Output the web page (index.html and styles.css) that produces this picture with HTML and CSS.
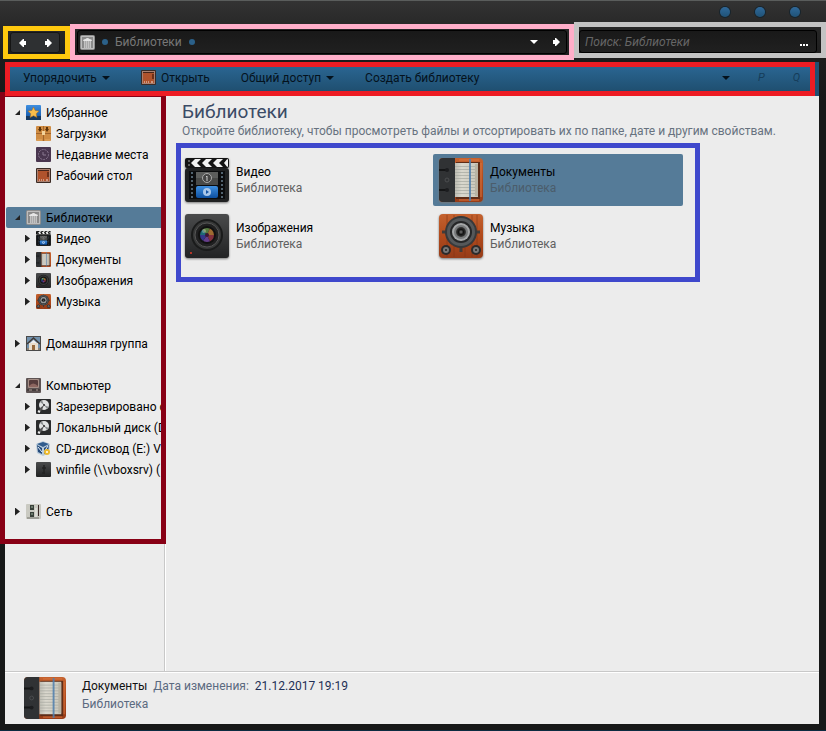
FILE: index.html
```html
<!DOCTYPE html>
<html lang="ru">
<head>
<meta charset="utf-8">
<title>Библиотеки</title>
<link rel="stylesheet" href="styles.css">
</head>
<body>
<svg class="sprite" aria-hidden="true">
  <defs>
    <linearGradient id="g-dark" x1="0" y1="0" x2="0" y2="1"><stop offset="0" stop-color="#4a4b4c"/><stop offset="1" stop-color="#222324"/></linearGradient>
    <linearGradient id="g-wood" x1="0" y1="0" x2="0" y2="1"><stop offset="0" stop-color="#c4622f"/><stop offset=".5" stop-color="#b14a1c"/><stop offset="1" stop-color="#963c18"/></linearGradient>
    <linearGradient id="g-blue" x1="0" y1="0" x2="0" y2="1"><stop offset="0" stop-color="#3f8fe0"/><stop offset="1" stop-color="#0d4fa0"/></linearGradient>
    <linearGradient id="g-silver" x1="0" y1="0" x2="0" y2="1"><stop offset="0" stop-color="#d8d8d8"/><stop offset="1" stop-color="#7d7d7d"/></linearGradient>
    <linearGradient id="g-page"><stop offset="0" stop-color="#bdbcb2"/><stop offset=".3" stop-color="#dad8ce"/><stop offset="1" stop-color="#c9c6b9"/></linearGradient>
    <radialGradient id="g-lens"><stop offset="0" stop-color="#777"/><stop offset=".5" stop-color="#111"/><stop offset="1" stop-color="#3a3a3a"/></radialGradient>
    <clipPath id="c-lens"><circle cx="22" cy="21" r="7"/></clipPath>
    <clipPath id="c-clap"><rect x="1" y="1" width="42" height="8" rx="1"/></clipPath>
  </defs>
  <symbol id="video" viewBox="0 0 44 44">
    <rect x="0" y="10" width="44" height="34" rx="3" fill="#202122"/>
    <rect x="0" y="0" width="44" height="10" rx="2" fill="#141414"/>
    <g clip-path="url(#c-clap)" fill="#f2f2f2"><path d="M11 0h6l-5 5 5 5h-6l-5-5zM22 0h6l-5 5 5 5h-6l-5-5zM33 0h6l-5 5 5 5h-6l-5-5zM43 0h3v10h-3l-4-5z"/></g>
    <circle cx="4" cy="3" r="1" fill="#777"/><circle cx="4" cy="7" r="1" fill="#777"/>
    <rect x="4" y="13" width="36" height="28" fill="#0b0c0e"/>
    <path d="M7 14v26M37 14v26" stroke="#51626f" stroke-width="2" stroke-dasharray="2 2"/>
    <rect x="11" y="14" width="22" height="13" fill="#5c5d5c"/><path d="M11 20h22v7H11z" fill="#484948"/>
    <circle cx="22" cy="20" r="4.500" fill="#444" stroke="#aaa" stroke-width="1"/><path d="M21 19l1-1v5" stroke="#ccc" fill="none"/>
    <rect x="11" y="28" width="22" height="12" rx="2" fill="url(#g-blue)"/>
    <circle cx="22" cy="34" r="4" fill="#a9c7ea"/><path d="M21 32l3 2-3 2z" fill="#1755a5"/>
  </symbol>
  <symbol id="docs" viewBox="0 0 44 44">
    <rect width="44" height="44" rx="4" fill="url(#g-wood)"/>
    <path d="M20 2h20M20 42h20M42 5v34" stroke="#d8743f" stroke-width="1"/>
    <path d="M17 4h24v37H17z" fill="#5e2d18"/>
    <path d="M16 5h23v34H16z" fill="url(#g-page)"/>
    <path d="M16 8.500h21M16 11.500h21M16 14.500h21M16 17.500h21M16 20.500h21M16 23.500h21M16 26.500h21M16 29.500h21M16 32.500h21M16 35.500h21" stroke="#a5a79f" stroke-width=".7"/>
    <path d="M36 6h3v32h-3z" fill="#b8b4a5"/>
    <path d="M31 1v42" stroke="#4f7fae" stroke-width="2" opacity=".85"/>
    <path d="M4 0h12v44H4q-4 0-4-4V4q0-4 4-4z" fill="#303234"/>
    <path d="M0 12h7M0 32h7" stroke="#151617" stroke-width="2"/><circle cx="8" cy="12" r="2" fill="#1c1d1f"/><circle cx="8" cy="32" r="2" fill="#1c1d1f"/>
    <circle cx="8" cy="22" r="2" fill="none" stroke="#4b4d4f"/>
  </symbol>
  <symbol id="images" viewBox="0 0 44 44">
    <rect width="44" height="44" rx="3" fill="url(#g-dark)"/>
    <circle cx="22" cy="21" r="16" fill="#1a1b1b"/><circle cx="22" cy="21" r="14" fill="#383939"/><circle cx="22" cy="21" r="12" fill="#202021" stroke="#555"/><circle cx="22" cy="21" r="9" fill="#111"/>
    <g clip-path="url(#c-lens)" opacity=".85"><path d="M22 21L14 12h12z" fill="#638d48"/><path d="M22 21l4-9 6 9z" fill="#b97b38"/><path d="M22 21h10l-6 9z" fill="#983846"/><path d="M22 21l4 9H16z" fill="#7546a0"/><path d="M22 21l-6 9-4-9z" fill="#3a3fa0"/><path d="M22 21H12l2-9z" fill="#227b87"/></g>
    <circle cx="22" cy="21" r="2" fill="#3b1635"/><circle cx="19" cy="17" r="2" fill="#fff" opacity=".3"/>
    <circle cx="6" cy="39" r="1" fill="#e13a28"/>
  </symbol>
  <symbol id="music" viewBox="0 0 44 44">
    <rect width="44" height="44" rx="4" fill="url(#g-wood)"/>
    <path d="M8 1v42M15 1v42M33 1v42M38 1v42M26 34v9" stroke="#7f3517" opacity=".6"/>
    <path d="M3 18h38M22 2v36" stroke="#413c39" stroke-width="3"/>
    <circle cx="22" cy="18" r="16" fill="#37393b"/><circle cx="22" cy="18" r="14" fill="#55585a"/><circle cx="22" cy="18" r="11" fill="#252627"/><circle cx="22" cy="18" r="9" fill="#a5a7a8"/><circle cx="22" cy="18" r="7" fill="#77797a"/><circle cx="22" cy="18" r="5" fill="url(#g-lens)"/>
    <circle cx="7" cy="36" r="5" fill="#2c2b2b"/><circle cx="7" cy="36" r="3" fill="#777"/><circle cx="7" cy="36" r="1" fill="#222"/>
    <circle cx="37" cy="36" r="5" fill="#2c2b2b"/><circle cx="37" cy="36" r="3" fill="#777"/><circle cx="37" cy="36" r="1" fill="#222"/>
  </symbol>
  <symbol id="library" viewBox="0 0 15 15">
    <rect x=".5" y=".5" width="14" height="14" rx="1" fill="#8a8a8a" stroke="#8f8f8f"/><rect x="1.500" y="1.500" width="12" height="12" fill="none" stroke="#bdbdbd"/>
    <path d="M3 6q0-2 2.500-2 2-2 4 0 2.500 0 2.500 2z" fill="#e6e6e6"/><path d="M4 6h7v7H4z" fill="#a8a8a8"/><path d="M4.500 6v7M6.500 6v7M8.500 6v7M10.500 6v7" stroke="#cacaca" stroke-width=".8"/>
  </symbol>
  <symbol id="star" viewBox="0 0 15 15">
    <rect width="15" height="15" rx="1" fill="url(#g-blue)"/><path d="M0 11h15v4H0z" fill="#163a62"/>
    <path d="M7.500 2l1.700 3.500 3.800.5-2.800 2.700.7 3.800-3.400-1.800-3.400 1.800.7-3.800L2 6l3.800-.5z" fill="#f9bd4b" stroke="#a96a1c" stroke-width=".5"/>
  </symbol>
  <symbol id="downloads" viewBox="0 0 15 15">
    <rect width="15" height="15" rx="1" fill="#cf8c43"/><path d="M0 7h15v1H0zM7 0h1v15H7z" fill="#a2642a"/><path d="M6 5h3v4H6z" fill="#f2d29a"/>
    <path d="M3 1h2v2h1L4 6 2 3h1zM10 1h2v2h1l-2 3-2-3h1z" fill="#5a3209"/><path d="M1 14h5M9 14h5" stroke="#e6ab62"/>
  </symbol>
  <symbol id="recent" viewBox="0 0 15 15">
    <rect width="15" height="15" rx="1" fill="#49364f"/><circle cx="7.500" cy="7.500" r="5" fill="none" stroke="#8a7891" stroke-dasharray="2 1"/><path d="M7 5v3h3" fill="none" stroke="#8a7891"/>
  </symbol>
  <symbol id="desktop" viewBox="0 0 15 15">
    <rect width="15" height="15" rx="1" fill="#3b2b25"/><rect x="1" y="1" width="13" height="13" fill="#a98070"/><rect x="2" y="2" width="11" height="11" fill="#b0532c"/><path d="M2 2.500h11" stroke="#45251a"/><path d="M11 4h2v5h-2z" fill="#6e2f17"/><path d="M3 12h1M5 12h1M7 12h1M10 12h2" stroke="#f0dfd6"/>
  </symbol>
  <symbol id="home" viewBox="0 0 15 15">
    <rect x=".5" y=".5" width="14" height="14" fill="#7191ad" stroke="#4a4a4a"/><path d="M3 7h9v7H3z" fill="#e8ddcc"/><path d="M1 8l6.500-6L14 8" fill="none" stroke="#403a36" stroke-width="1.500"/><path d="M4 7l3.500-3L11 7z" fill="#eee"/><path d="M6 9h3v5H6z" fill="#96693c"/><path d="M1 13h2M12 13h2" stroke="#8a8378" stroke-width="2"/>
  </symbol>
  <symbol id="computer" viewBox="0 0 15 15">
    <rect width="15" height="15" rx="1" fill="#5d5353"/><rect x="2" y="1" width="11" height="9" rx="1" fill="#a58e86"/><rect x="3" y="2" width="9" height="7" rx="1" fill="#563c3c"/><path d="M3 8q4-5 9 0v1H3z" fill="#8d6660"/><path d="M1 12h13" stroke="#302929"/><path d="M3 12h3M10 12h2" stroke="#ad9c95"/>
  </symbol>
  <symbol id="disk" viewBox="0 0 15 15">
    <rect width="15" height="15" rx="1" fill="#292a2b"/><circle cx="8" cy="6" r="5" fill="#e1e3e3"/><path d="M8 6L4 3l2-2zM8 6l5 2-2 2z" fill="#8c9091"/><circle cx="8" cy="6" r="1" fill="#222"/><path d="M3 13l1-4 4-3-2 5z" fill="#555"/><path d="M2 12l2 1" stroke="#eee" stroke-width="2"/>
  </symbol>
  <symbol id="cd" viewBox="0 0 15 15">
    <path d="M7 0l7 3-1 9-6 3-6-3-1-9z" fill="#b8cada"/><path d="M7 1l6 2-6 3-6-3z" fill="#315c8d"/><path d="M1 4l5 3v6l-4-2zM8 7l5-3-1 7-4 2z" fill="#244a7b"/><path d="M2 6l4 5M12 5l-4 6" stroke="#e9f3fc"/><circle cx="11" cy="11" r="3" fill="#edb92d"/><circle cx="11" cy="11" r="1" fill="#fff"/>
  </symbol>
  <symbol id="netdrive" viewBox="0 0 15 15">
    <rect width="15" height="15" rx="1" fill="url(#g-dark)"/><path d="M8 3v9M6 6h4M6 11h3" stroke="#222323" stroke-width="1.500"/>
  </symbol>
  <symbol id="network" viewBox="0 0 15 15">
    <rect width="15" height="15" rx="1" fill="#c9c9c1"/><path d="M4 1h4v5H4zM4 8h4v5H4z" fill="#39413a"/><path d="M5 2h2v2H5zM5 9h2v2H5z" fill="#6c7a6d"/><path d="M12.500 1v11" stroke="#3a2927"/><path d="M10 4v9" stroke="#efefea"/><path d="M1 14h12" stroke="#74746e"/>
  </symbol>
  <symbol id="arrow" viewBox="0 0 8 8"><path d="M1 2h2V0h1l4 4-4 4H3V6H1z" fill="#fff"/></symbol>
  <symbol id="caret" viewBox="0 0 8 4"><path d="M0 0h8L4 4z" fill="currentColor"/></symbol>
</svg>

<div class="window">
  <div class="titlebar">
    <button class="orb" aria-label="Свернуть"></button>
    <button class="orb" aria-label="Развернуть"></button>
    <button class="orb" aria-label="Закрыть"></button>
  </div>

  <div class="navrow">
    <div class="mark mark-yellow">
      <div class="history">
        <button aria-label="Назад"><svg class="arrow back"><use href="#arrow"/></svg></button>
        <button aria-label="Вперёд"><svg class="arrow"><use href="#arrow"/></svg></button>
      </div>
    </div>
    <div class="mark mark-pink">
      <div class="address">
        <svg class="icon"><use href="#library"/></svg>
        <span class="bead"></span>
        <a href="#">Библиотеки</a>
        <span class="bead"></span>
        <button class="push" aria-label="Предыдущие расположения"><svg class="caret"><use href="#caret"/></svg></button>
        <button aria-label="Обновить"><svg class="arrow"><use href="#arrow"/></svg></button>
      </div>
    </div>
    <div class="mark mark-gray">
      <div class="search">
        <input type="search" aria-label="Поиск" placeholder="Поиск: Библиотеки">
        <button class="dots" aria-label="Найти"><i></i><i></i><i></i></button>
      </div>
    </div>
  </div>

  <div class="toolbar">
    <div class="commands">
      <button>Упорядочить <svg class="caret"><use href="#caret"/></svg></button>
      <button><svg class="icon"><use href="#desktop"/></svg>Открыть</button>
      <button>Общий доступ <svg class="caret"><use href="#caret"/></svg></button>
      <button>Создать библиотеку</button>
      <div class="views">
        <button aria-label="Вид"><svg class="caret"><use href="#caret"/></svg></button>
        <button class="faint">P</button>
        <button class="faint">Q</button>
      </div>
    </div>
  </div>

  <div class="content">
    <div class="side">
      <nav class="tree">
        <ul>
          <li><a href="#"><i class="tri open-tri"></i><svg class="icon"><use href="#star"/></svg><span>Избранное</span></a></li>
          <li class="sub"><a href="#"><i class="tri none"></i><svg class="icon"><use href="#downloads"/></svg><span>Загрузки</span></a></li>
          <li class="sub"><a href="#"><i class="tri none"></i><svg class="icon"><use href="#recent"/></svg><span>Недавние места</span></a></li>
          <li class="sub"><a href="#"><i class="tri none"></i><svg class="icon"><use href="#desktop"/></svg><span>Рабочий стол</span></a></li>
        </ul>
        <ul>
          <li class="current"><a href="#"><i class="tri open-tri"></i><svg class="icon"><use href="#library"/></svg><span>Библиотеки</span></a></li>
          <li class="sub"><a href="#"><i class="tri"></i><svg class="icon"><use href="#video"/></svg><span>Видео</span></a></li>
          <li class="sub"><a href="#"><i class="tri"></i><svg class="icon"><use href="#docs"/></svg><span>Документы</span></a></li>
          <li class="sub"><a href="#"><i class="tri"></i><svg class="icon"><use href="#images"/></svg><span>Изображения</span></a></li>
          <li class="sub"><a href="#"><i class="tri"></i><svg class="icon"><use href="#music"/></svg><span>Музыка</span></a></li>
        </ul>
        <ul>
          <li><a href="#"><i class="tri"></i><svg class="icon"><use href="#home"/></svg><span>Домашняя группа</span></a></li>
        </ul>
        <ul>
          <li><a href="#"><i class="tri open-tri"></i><svg class="icon"><use href="#computer"/></svg><span>Компьютер</span></a></li>
          <li class="sub"><a href="#"><i class="tri"></i><svg class="icon"><use href="#disk"/></svg><span>Зарезервировано с</span></a></li>
          <li class="sub"><a href="#"><i class="tri"></i><svg class="icon"><use href="#disk"/></svg><span>Локальный диск (D</span></a></li>
          <li class="sub"><a href="#"><i class="tri"></i><svg class="icon"><use href="#cd"/></svg><span>CD-дисковод (E:) Vi</span></a></li>
          <li class="sub"><a href="#"><i class="tri"></i><svg class="icon"><use href="#netdrive"/></svg><span>winfile (\\vboxsrv) (</span></a></li>
        </ul>
        <ul>
          <li><a href="#"><i class="tri"></i><svg class="icon"><use href="#network"/></svg><span>Сеть</span></a></li>
        </ul>
      </nav>
    </div>

    <main class="main">
      <header class="heading">
        <h1>Библиотеки</h1>
        <p>Откройте библиотеку, чтобы просмотреть файлы и отсортировать их по папке, дате и другим свойствам.</p>
      </header>
      <div class="mark mark-blue">
        <div class="tiles">
          <a class="tile" href="#"><svg class="big"><use href="#video"/></svg><span>Видео<small>Библиотека</small></span></a>
          <a class="tile selected" href="#"><svg class="big"><use href="#docs"/></svg><span>Документы<small>Библиотека</small></span></a>
          <a class="tile" href="#"><svg class="big"><use href="#images"/></svg><span>Изображения<small>Библиотека</small></span></a>
          <a class="tile" href="#"><svg class="big"><use href="#music"/></svg><span>Музыка<small>Библиотека</small></span></a>
        </div>
      </div>
    </main>
  </div>

  <footer class="details">
    <svg class="thumb"><use href="#docs"/></svg>
    <div>
      <div class="line"><strong>Документы</strong><span>Дата изменения:</span><time datetime="2017-12-21T19:19">21.12.2017 19:19</time></div>
      <div class="line"><span>Библиотека</span></div>
    </div>
  </footer>
</div>
</body>
</html>
```
FILE: styles.css
```css
* { box-sizing: border-box; }

body {
  margin: 0;
  background: #0c2b40;
  color: #000;
  font: 12px/16px Roboto, "Noto Sans", sans-serif;
}

.sprite { position: absolute; width: 0; height: 0; }
svg { display: block; flex: none; }
a { color: inherit; text-decoration: none; }
button {
  display: flex;
  align-items: center;
  padding: 0;
  border: 0;
  background: none;
  color: inherit;
  font: inherit;
}

.icon { width: 15px; height: 15px; }
.arrow { width: 8px; height: 8px; }
.back { transform: scaleX(-1); }
.caret { width: 8px; height: 4px; }

.window {
  display: flex;
  flex-direction: column;
  min-height: 100vh;
  border-top: 1px solid #5a5d5c;
  border-bottom: 1px solid #0c2b40;
  background: linear-gradient(#333 0, #282828 24px, #1c1c1c 60px, #171818 100px);
}

.titlebar {
  display: flex;
  justify-content: flex-end;
  align-items: center;
  gap: 25px;
  height: 21px;
  padding: 1px 26px 0 0;
}
.orb {
  width: 10px;
  height: 10px;
  border-radius: 50%;
  background: linear-gradient(#30699a, #1f5277);
  box-shadow: 0 0 0 1px #17242d;
}

.mark { border: 5px solid; }
.mark-yellow { width: 67px; height: 33px; margin-top: 4px; border-color: #ffc90e; }
.mark-pink { flex: 1; min-width: 0; height: 36px; margin-top: 2px; border-color: #ffaec9; }
.mark-gray { width: 252px; height: 36px; border-color: #c3c3c3; }
.mark-blue { width: fit-content; border-color: #3f48cc; }

.navrow {
  display: flex;
  align-items: flex-start;
  height: 39px;
  padding-left: 3px;
}
.history, .address, .search {
  display: flex;
  align-items: center;
  border: 1px solid #000;
  border-radius: 3px;
  background: linear-gradient(#191919, #202020);
}
.history {
  justify-content: space-between;
  height: 21px;
  margin: 1px 5px 1px 2px;
  padding: 0 7px 0 8px;
  border-color: #151515;
  background: #2e3032;
}
.address {
  gap: 7px;
  height: 24px;
  margin: 1px 2px;
  padding: 0 6px 0 2px;
  color: #777;
}
.address .caret { color: #fff; }
.address button:last-child { margin-left: 7px; }
.push { margin-left: auto; }
.bead {
  width: 6px;
  height: 6px;
  border-radius: 50%;
  background: #2b6089;
}
.search {
  height: 23px;
  margin: 3px 4px 0 0;
  padding: 0 8px 0 5px;
}
.search input {
  flex: 1;
  min-width: 0;
  padding: 0;
  border: 0;
  outline: 0;
  background: none;
  color: #ccc;
  font: inherit;
  font-style: italic;
}
.search input::placeholder { color: #666; opacity: 1; }
.dots { gap: 1px; padding-top: 6px; }
.dots i { width: 2px; height: 2px; background: #fff; }

.toolbar {
  height: 34px;
  margin: 1px 7px 0 5px;
  background: #205072;
  position: relative;
  z-index: 1;
}
.commands {
  display: flex;
  align-items: center;
  gap: 31px;
  height: 34px;
  margin-right: 4px;
  padding: 0 10px 3px 13px;
  border: 5px solid #ed1c24;
  background: linear-gradient(#2a6591, #1f4f70);
  color: #04121d;
}
.commands button { gap: 5px; }
.views { display: flex; gap: 28px; margin-left: auto; }
.views .faint { color: #153c59; font-style: italic; font-size: 11px; }

.content {
  display: flex;
  flex: 1;
  margin: 0 7px 0 5px;
  background: #ececec;
}
.side {
  width: 160px;
  border-right: 1px solid #c8c8c8;
}
.tree {
  width: 166px;
  margin: -4px 0 0 -5px;
  padding: 5px 0 17px;
  border: 5px solid #880015;
  background: #ececec;
  position: relative;
}
.tree ul { margin: 0 0 21px; padding: 0; list-style: none; }
.tree ul:last-child { margin: 0; }
.tree li { overflow: hidden; margin-left: 1px; border-radius: 2px 0 0 2px; }
.tree a {
  display: flex;
  align-items: center;
  height: 21px;
  padding-left: 9px;
  white-space: nowrap;
}
.tree .sub a { padding-left: 19px; }
.tree span { padding-left: 5px; }
.tree .current { background: #557b98; }
.tri {
  flex: none;
  width: 5px;
  height: 8px;
  margin-right: 6px;
  background: #222;
  clip-path: polygon(0 0, 100% 50%, 0 100%);
}
.open-tri { height: 5px; clip-path: polygon(100% 0, 100% 100%, 0 100%); }
.none { visibility: hidden; }

.main {
  flex: 1;
  min-width: 0;
  padding: 4px 10px;
  border-left: 1px solid #fff;
}
.heading {
  padding: 0 0 4px 6px;
}
h1 {
  margin: 0;
  color: #3b4b66;
  font-size: 19px;
  font-weight: 400;
  line-height: 23px;
}
.heading p { margin: 0; color: #67727f; white-space: nowrap; }

.tiles {
  display: grid;
  grid-template-columns: 250px 250px;
  gap: 4px;
  margin-left: -2px;
  padding: 6px 12px 15px 0;
}
.tile {
  display: flex;
  align-items: center;
  gap: 7px;
  height: 52px;
  padding-left: 6px;
  border-radius: 2px;
}
.tile small { display: block; color: #606060; font-size: 12px; }
.selected { background: #557b98; }
.selected small { color: #4b5d6b; }
.big { width: 44px; height: 44px; filter: drop-shadow(0 1px 1px #777); }

.details {
  display: flex;
  gap: 16px;
  height: 53px;
  margin: 0 7px 6px 5px;
  padding: 5px 19px;
  border-top: 1px solid #c8c8c8;
  box-shadow: inset 0 1px #fff;
  background: #ececec;
}
.thumb { width: 42px; height: 42px; }
.line { display: flex; gap: 6px; line-height: 18px; color: #5b6a80; }
.line strong { color: #111; font-weight: 400; }
.line time { color: #1e2f55; }
```
